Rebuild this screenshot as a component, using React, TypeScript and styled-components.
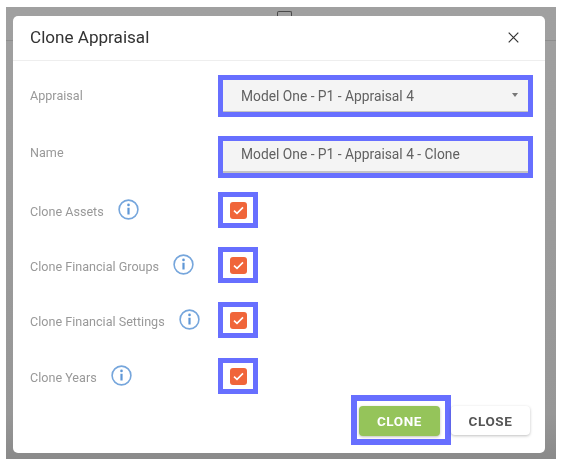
import styled, { createGlobalStyle } from 'styled-components';

const GlobalStyle = createGlobalStyle`
  html, body {
    margin: 0;
    padding: 0;
    background: #fff;
    font-family: Roboto, "Liberation Sans", sans-serif;
  }
`;

const rows = [
  { label: 'Clone Assets', gap: 14 },
  { label: 'Clone Financial Groups', gap: 19 },
  { label: 'Clone Financial Settings', gap: 19 },
  { label: 'Clone Years', gap: 20 },
];

function InfoIcon() {
  return (
    <svg width="21" height="21" viewBox="0 0 21 21" fill="none">
      <circle cx="10.5" cy="10.5" r="9.4" stroke="#76a6dc" strokeWidth="1.6" />
      <circle cx="10.5" cy="5.9" r="1.3" fill="#5f97d6" />
      <path d="M10.5 8.8v6.8" stroke="#5f97d6" strokeWidth="2.2" />
    </svg>
  );
}

function CheckIcon() {
  return (
    <svg width="11" height="9" viewBox="0 0 11 9" fill="none">
      <path d="M1 4.6l3 2.8L10 1.4" stroke="#fff" strokeWidth="1.6" />
    </svg>
  );
}

function CloseIcon() {
  return (
    <svg width="11" height="11" viewBox="0 0 11 11" fill="none">
      <path d="M.7.7l9.6 9.6M10.3.7L.7 10.3" stroke="#333" strokeWidth="1.2" />
    </svg>
  );
}

export default function App() {
  return (
    <Page>
      <GlobalStyle />
      <Backdrop>
        <BackdropTab />
        <BackdropLine />
        <Modal>
          <Header>
            <Title>Clone Appraisal</Title>
            <CloseIcon />
          </Header>
          <Body>
            <FieldRow>
              <FieldLabel>Appraisal</FieldLabel>
              <Highlight>
                <SelectBox>
                  Model One - P1 - Appraisal 4
                  <Caret />
                </SelectBox>
              </Highlight>
            </FieldRow>
            <FieldRow $top={19}>
              <FieldLabel $lift={9}>Name</FieldLabel>
              <Highlight>
                <TextBox>Model One - P1 - Appraisal 4 - Clone</TextBox>
              </Highlight>
            </FieldRow>
            {rows.map((row) => (
              <CheckRow key={row.label} $top={row.gap}>
                <CheckLabel>
                  <span>{row.label}</span>
                  <InfoIcon />
                </CheckLabel>
                <CheckHighlight>
                  <CheckBox>
                    <CheckIcon />
                  </CheckBox>
                </CheckHighlight>
              </CheckRow>
            ))}
            <Actions>
              <ButtonHighlight>
                <CloneButton>CLONE</CloneButton>
              </ButtonHighlight>
              <CloseButton>CLOSE</CloseButton>
            </Actions>
          </Body>
        </Modal>
      </Backdrop>
    </Page>
  );
}

const Page = styled.div`
  width: 568px;
  height: 469px;
  padding: 7px 12px 10px 6px;
  box-sizing: border-box;
  overflow: hidden;
  filter: blur(0.4px);
`;

const Backdrop = styled.div`
  position: relative;
  height: 452px;
  padding: 9px 11px 6px 7px;
  box-sizing: border-box;
  background: linear-gradient(180deg, #a0a0a0 0%, #979797 90%, #8a8a8a 100%);
`;

const BackdropTab = styled.div`
  position: absolute;
  left: 271px;
  top: 4px;
  width: 15px;
  height: 8px;
  border: 1px solid #4a4a4a;
  border-bottom: none;
  border-radius: 2px 2px 0 0;
  box-sizing: border-box;
`;

const BackdropLine = styled.div`
  position: absolute;
  left: 0;
  right: 0;
  top: 33px;
  height: 1px;
  background: #8e8e8e;
`;

const Modal = styled.div`
  position: relative;
  height: 437px;
  background: #fff;
  border-radius: 5px;
  overflow: hidden;
`;

const Header = styled.div`
  display: flex;
  align-items: center;
  justify-content: space-between;
  height: 45px;
  padding: 0 26px 2px 17px;
  box-sizing: border-box;
  border-bottom: 1px solid #eeeeee;
`;

const Title = styled.div`
  font-size: 17.1px;
  color: #333;
`;

const Body = styled.div`
  padding: 14px 12px 0 17px;
`;

const FieldRow = styled.div<{ $top?: number }>`
  display: grid;
  grid-template-columns: 188px 315px;
  align-items: center;
  margin-top: ${(p) => p.$top ?? 0}px;
`;

const FieldLabel = styled.div<{ $lift?: number }>`
  font-size: 12.6px;
  color: #999;
  margin-top: -${(p) => p.$lift ?? 1}px;
`;

const Highlight = styled.div`
  height: 42px;
  box-sizing: border-box;
  border: 5px solid #676fff;
  display: flex;
`;

const SelectBox = styled.div`
  position: relative;
  flex: 1;
  display: flex;
  align-items: center;
  padding-left: 18px;
  font-size: 13.8px;
  color: #616161;
  background: #f4f4f4;
  border-bottom: 1px solid #c4c4c4;
`;

const Caret = styled.span`
  position: absolute;
  right: 10px;
  top: 13px;
  width: 0;
  height: 0;
  border-left: 3.5px solid transparent;
  border-right: 3.5px solid transparent;
  border-top: 4px solid #777;
`;

const TextBox = styled.div`
  flex: 1;
  display: flex;
  align-items: center;
  padding: 0 0 5px 18px;
  font-size: 13.8px;
  color: #616161;
  background: #f4f4f4;
  border-bottom: 2px solid #c4c4c4;
`;

const CheckRow = styled(FieldRow)`
  height: 36px;
`;

const CheckLabel = styled.div`
  display: flex;
  align-items: center;
  gap: 14px;
  font-size: 12.6px;
  color: #999;

  span {
    margin-top: 3px;
  }

  svg {
    margin-top: -2px;
  }
`;

const CheckHighlight = styled.div`
  width: 40px;
  height: 36px;
  box-sizing: border-box;
  border: 5px solid #676fff;
  display: flex;
  align-items: center;
  justify-content: center;
`;

const CheckBox = styled.div`
  width: 17px;
  height: 17px;
  display: flex;
  align-items: center;
  justify-content: center;
  background: #f0653a;
  border-radius: 3px;
`;

const Actions = styled.div`
  display: flex;
  align-items: center;
  margin-top: 1px;
  padding-left: 321px;
`;

const ButtonHighlight = styled.div`
  width: 100px;
  height: 50px;
  box-sizing: border-box;
  border: 6px solid #676fff;
  display: flex;
  align-items: center;
  padding: 1px 0 0 2px;
`;

const CloneButton = styled.button`
  width: 81px;
  height: 30px;
  padding: 1px 0 0;
  border: none;
  border-radius: 4px;
  background: #95c45a;
  color: #fff;
  font-family: inherit;
  font-size: 13.5px;
  font-weight: 700;
  letter-spacing: 0.6px;
  box-shadow: 0 1px 3px rgba(0, 0, 0, 0.25);
`;

const CloseButton = styled.button`
  width: 79px;
  height: 29px;
  margin-top: 1px;
  padding: 1px 0 0;
  border: none;
  border-radius: 4px;
  background: #fff;
  color: #555;
  font-family: inherit;
  font-size: 13.5px;
  font-weight: 700;
  letter-spacing: 0.6px;
  box-shadow: 0 1px 3px rgba(0, 0, 0, 0.25);
`;
